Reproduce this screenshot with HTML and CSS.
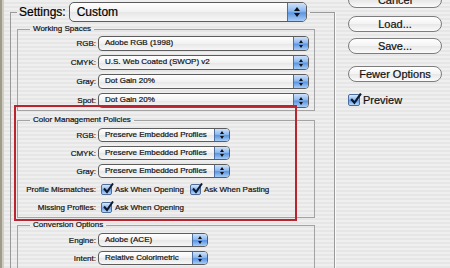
FILE: index.html
```html
<!DOCTYPE html>
<html lang="en">
<head>
    <meta charset="UTF-8">
    <title>Color Settings</title>
    <link rel="stylesheet" href="styles.css">
</head>
<body>
    <div class="dialog">
        <fieldset class="settings">
            <legend>
                <div class="settings-head">
                    <span class="settings-label">Settings:</span>
                    <span class="popup popup-large"><span class="popup-text">Custom</span><span class="arrows"></span></span>
                </div>
            </legend>

            <fieldset class="group working">
                <legend>Working Spaces</legend>
                <div class="row"><span class="label">RGB:</span><span class="popup ws"><span class="popup-text">Adobe RGB (1998)</span><span class="arrows"></span></span></div>
                <div class="row"><span class="label">CMYK:</span><span class="popup ws"><span class="popup-text">U.S. Web Coated (SWOP) v2</span><span class="arrows"></span></span></div>
                <div class="row"><span class="label">Gray:</span><span class="popup ws"><span class="popup-text">Dot Gain 20%</span><span class="arrows"></span></span></div>
                <div class="row"><span class="label">Spot:</span><span class="popup ws"><span class="popup-text">Dot Gain 20%</span><span class="arrows"></span></span></div>
            </fieldset>

            <fieldset class="group policies">
                <legend>Color Management Policies</legend>
                <div class="row"><span class="label">RGB:</span><span class="popup cm"><span class="popup-text">Preserve Embedded Profiles</span><span class="arrows"></span></span></div>
                <div class="row"><span class="label">CMYK:</span><span class="popup cm"><span class="popup-text">Preserve Embedded Profiles</span><span class="arrows"></span></span></div>
                <div class="row"><span class="label">Gray:</span><span class="popup cm"><span class="popup-text">Preserve Embedded Profiles</span><span class="arrows"></span></span></div>
                <div class="row">
                    <span class="label">Profile Mismatches:</span>
                    <span class="check"><svg viewBox="0 0 12 12" width="12" height="12"><path d="M2 5.5 L5 9 L11 0.5" fill="none" stroke="#0e1b30" stroke-width="2"/></svg></span>
                    <span class="check-text">Ask When Opening</span>
                    <span class="check second"><svg viewBox="0 0 12 12" width="12" height="12"><path d="M2 5.5 L5 9 L11 0.5" fill="none" stroke="#0e1b30" stroke-width="2"/></svg></span>
                    <span class="check-text">Ask When Pasting</span>
                </div>
                <div class="row">
                    <span class="label">Missing Profiles:</span>
                    <span class="check"><svg viewBox="0 0 12 12" width="12" height="12"><path d="M2 5.5 L5 9 L11 0.5" fill="none" stroke="#0e1b30" stroke-width="2"/></svg></span>
                    <span class="check-text">Ask When Opening</span>
                </div>
            </fieldset>

            <fieldset class="group conversion">
                <legend>Conversion Options</legend>
                <div class="row"><span class="label">Engine:</span><span class="popup cv"><span class="popup-text">Adobe (ACE)</span><span class="arrows"></span></span></div>
                <div class="row"><span class="label">Intent:</span><span class="popup cv"><span class="popup-text">Relative Colorimetric</span><span class="arrows"></span></span></div>
            </fieldset>
        </fieldset>

        <div class="side">
            <button class="cancel">Cancel</button>
            <button>Load...</button>
            <button>Save...</button>
            <button class="fewer">Fewer Options</button>
            <label class="preview">
                <span class="check big"><svg viewBox="0 0 12 12" width="13" height="13"><path d="M2 5.5 L5 9 L11 0.5" fill="none" stroke="#0e1b30" stroke-width="2"/></svg></span>
                Preview
            </label>
        </div>
    </div>

    <div class="highlight"></div>
</body>
</html>
```

FILE: styles.css
```css
body {
    margin: 0;
    width: 450px;
    height: 268px;
    overflow: hidden;
    position: relative;
    font-family: "Liberation Sans", Arial, sans-serif;
    font-size: 8px;
    color: #111;
    -webkit-text-stroke: 0.2px currentColor;
    background:
        linear-gradient(to right, #9e9c88 0 2px, #cfcdc2 2px 4px, transparent 4px),
        repeating-linear-gradient(to bottom, #efefef 0 2px, #e6e6e6 2px 4px);
}
.dialog {
    display: flex;
    align-items: flex-start;
    padding-left: 10px;
}
.settings {
    margin: 2px 0 0;
    padding: 2px 19px 20px 6px;
    width: 325px;
    min-width: 0;
    box-sizing: border-box;
    border: 1px solid #999;
    box-shadow: 1px 0 0 #fafafa;
}
.settings > legend {
    padding: 0 3px 0 2px;
}
.settings-head {
    display: flex;
    align-items: center;
}
.settings-label {
    font-size: 12px;
    color: #000;
    margin-right: 3px;
}
.group {
    margin: 0;
    padding: 0;
    min-width: 0;
    border: 1px solid #a3a3a3;
}
.group > legend {
    margin-left: 12px;
    padding: 0 3px;
    font-size: 8px;
    line-height: 10px;
}
.working .row {
    height: 19px;
}
.policies {
    margin-top: 4px;
    padding: 1px 0;
}
.conversion {
    margin-top: 2px;
    padding: 1px 0 12px;
}
.row {
    display: flex;
    align-items: center;
    height: 18px;
}
.label {
    flex: none;
    width: 78px;
    margin-right: 2px;
    text-align: right;
}
.popup {
    display: flex;
    height: 14px;
    box-sizing: border-box;
    border: 1px solid #5c5c5c;
    border-radius: 4px;
    overflow: hidden;
    background: linear-gradient(#ffffff, #f1f1f1 50%, #e6e6e6 51%, #f7f7f7);
}
.popup-text {
    flex: 1;
    padding-left: 6px;
    line-height: 12px;
    white-space: nowrap;
}
.arrows {
    flex: none;
    width: 14px;
    display: flex;
    flex-direction: column;
    align-items: center;
    justify-content: center;
    gap: 2px;
    border-left: 1px solid #4d6f9f;
    background: linear-gradient(#cfe2fb, #8db9ef 45%, #5b95e2 55%, #a9cdf6);
}
.arrows::before,
.arrows::after {
    content: "";
    border-left: 2.5px solid transparent;
    border-right: 2.5px solid transparent;
}
.arrows::before {
    border-bottom: 3px solid #111;
}
.arrows::after {
    border-top: 3px solid #111;
}
.ws {
    width: 211px;
    height: 15px;
}
.cm {
    width: 132px;
}
.cv {
    width: 110px;
}
.popup-large {
    width: 238px;
    height: 20px;
    border-radius: 5px;
}
.popup-large .popup-text {
    font-size: 12px;
    line-height: 18px;
    padding-left: 7px;
    color: #000;
}
.popup-large .arrows {
    width: 18px;
    gap: 2px;
}
.popup-large .arrows::before,
.popup-large .arrows::after {
    border-left-width: 3px;
    border-right-width: 3px;
}
.popup-large .arrows::before {
    border-bottom-width: 4px;
}
.popup-large .arrows::after {
    border-top-width: 4px;
}
.check {
    position: relative;
    flex: none;
    width: 11px;
    height: 11px;
    box-sizing: border-box;
    margin: 0 3px 0 3px;
    border: 1px solid #4f6d9a;
    border-radius: 2px;
    background: linear-gradient(#d9e8fb, #86b4ec 50%, #5f98e2 51%, #b9d7f8);
}
.check svg {
    position: absolute;
    left: 0;
    top: -2px;
}
.check.second {
    margin-left: 6px;
}
.side {
    display: flex;
    flex-direction: column;
    width: 94px;
    margin: -8px 0 0 13px;
}
button {
    height: 16px;
    margin-bottom: 6px;
    padding: 0;
    border: 1px solid #7d7d7d;
    border-radius: 8px;
    background: linear-gradient(#ffffff, #f3f3f3 50%, #e7e7e7 51%, #fbfbfb);
    font-family: "Liberation Sans", Arial, sans-serif;
    font-size: 11px;
    color: #111;
    -webkit-text-stroke: 0.2px currentColor;
    line-height: 14px;
}
.cancel {
    margin-bottom: 8px;
}
.fewer {
    margin-top: 6px;
    margin-bottom: 12px;
}
.preview {
    display: flex;
    align-items: center;
    font-size: 11px;
    color: #111;
}
.check.big {
    width: 12px;
    height: 12px;
    margin: 0 3px 0 0;
}
.highlight {
    position: absolute;
    left: 14px;
    top: 105px;
    width: 283px;
    height: 116px;
    box-sizing: border-box;
    border: 2px solid #b8242f;
}
```
